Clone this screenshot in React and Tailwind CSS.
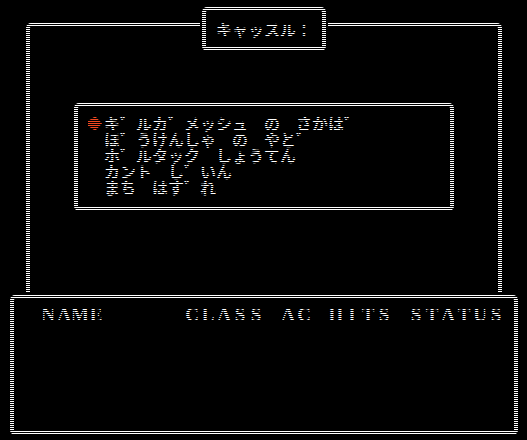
import React from 'react';

const jp = "font-['Noto_Sans_CJK_JP','Noto_Sans_CJK_SC',sans-serif]";
const latin = "font-['Liberation_Serif',serif]";

const menu = [
  'キ゛ルカ゛メッシュ の さかは゛',
  'ほ゛うけんしゃ の やと゛',
  'ホ゛ルタック しょうてん',
  'カント し゛いん',
  'まち はす゛れ',
];

function Cells({ text }) {
  return Array.from(text).map((ch, i) => (
    <span key={i} className="w-4 shrink-0 flex justify-center">
      {ch === ' ' ? '\u00a0' : ch}
    </span>
  ));
}

function Cursor() {
  return (
    <svg width="14" height="13" viewBox="0 0 14 13">
      <polygon points="6,0 8,0 14,6.5 8,13 6,13 0,9 0,4" fill="#f04820" />
    </svg>
  );
}

export default function App() {
  return (
    <div className="relative w-[527px] h-[440px] bg-black overflow-hidden text-white">
      <div className="pt-[23px] pl-[26px]">
        <div className="w-[476px] h-[269px] border-x-4 border-t-4 border-white rounded-t-[5px] flex flex-col items-center">
          <div className={`-mt-[20px] w-[124px] h-[44px] bg-black ring-2 ring-black border-4 border-white rounded-[5px] flex items-center justify-center text-[16px] font-bold leading-4 ${jp}`}>
            <Cells text="キャッスル：" />
          </div>

          <div className={`mt-[52px] w-[380px] h-[108px] border-4 border-white rounded-[5px] pl-[10px] pt-[8px] flex flex-col text-[16px] font-bold leading-4 ${jp}`}>
            {menu.map((line, i) => (
              <div key={i} className="flex">
                <span className="w-4 shrink-0 flex items-center">{i === 0 && <Cursor />}</span>
                <Cells text={line} />
              </div>
            ))}
          </div>
        </div>
      </div>

      <div className="ml-[10px] mt-[3px] w-[508px] h-[140px] border-4 border-white rounded-[5px] pl-[26px] pt-[6px]">
        <div className={`flex text-[19px] font-bold leading-5 ${latin}`}>
          <Cells text="NAME     CLASS AC HITS STATUS" />
        </div>
      </div>

      <div className="pointer-events-none absolute inset-0 bg-[repeating-linear-gradient(to_bottom,#000_0px,#000_1px,transparent_1px,transparent_2px)]" />
    </div>
  );
}
